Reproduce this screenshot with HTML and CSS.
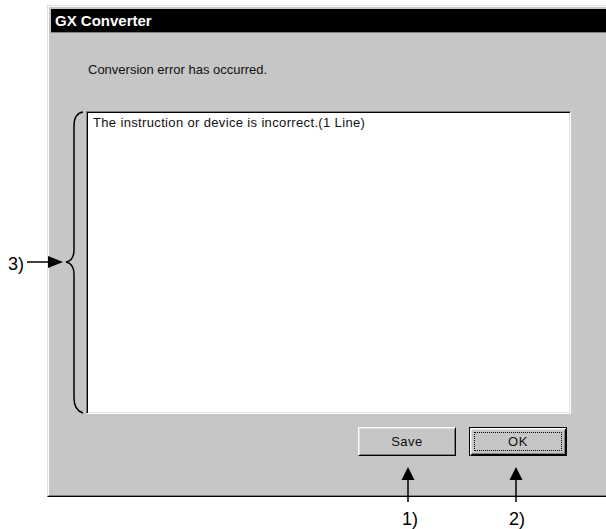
FILE: index.html
```html
<!DOCTYPE html>
<html lang="en">
<head>
    <meta charset="UTF-8">
    <title>GX Converter - Conversion error</title>
    <link rel="stylesheet" href="styles.css">
</head>
<body>
    <div class="page">
        <!-- Error dialog -->
        <div class="dialog">
            <div class="frame">
                <div class="title-bar">GX Converter</div>
                <div class="dialog-body">
                    <p class="message">Conversion error has occurred.</p>
                    <div class="list-box">
                        <div class="list-item">The instruction or device is incorrect.(1 Line)</div>
                    </div>
                    <div class="buttons">
                        <button class="btn">Save</button>
                        <button class="btn btn-default"><span class="focus">OK</span></button>
                    </div>
                </div>
            </div>
        </div>

        <!-- Callouts drawn over the screenshot -->
        <svg class="callouts" width="606" height="529" viewBox="0 0 606 529">
            <path d="M83,112 C76,113 74,118 74,126 L74,250 C74,257 71,261 66,262 C71,263 74,267 74,274 L74,398 C74,406 76,411 83,413" fill="none" stroke="#000" stroke-width="1.5"/>
            <line x1="27" y1="262" x2="50" y2="262" stroke="#000" stroke-width="1.5"/>
            <polygon points="48,256 63,262 48,268" fill="#000"/>
            <text x="8" y="270" class="label">3)</text>

            <polygon points="408,467 401.5,480 414.5,480" fill="#000"/>
            <line x1="408" y1="479" x2="408" y2="502" stroke="#000" stroke-width="1.5"/>
            <text x="402" y="525" class="label">1)</text>

            <polygon points="516,467 509.5,480 522.5,480" fill="#000"/>
            <line x1="516" y1="479" x2="516" y2="502" stroke="#000" stroke-width="1.5"/>
            <text x="509" y="525" class="label">2)</text>
        </svg>
    </div>
</body>
</html>
```

FILE: styles.css
```css
/* General Styles */
body {
    margin: 0;
    background-color: #fff;
    font-family: 'Liberation Sans', Arial, sans-serif;
    overflow: hidden;
}

.page {
    position: relative;
    width: 606px;
    height: 529px;
    overflow: hidden;
}

/* Dialog window (Win95 style) */
.dialog {
    margin: 5px 0 0 47px;
    width: 600px;
    border: 1px solid;
    border-color: #dfdfdf #000 #000 #dfdfdf;
}

.frame {
    border: 1px solid;
    border-color: #fff #808080 #808080 #fff;
    background-color: #c6c6c6;
    padding: 2px;
}

.title-bar {
    height: 23px;
    line-height: 23px;
    background-color: #000;
    color: #fff;
    font-weight: bold;
    font-size: 15px;
    padding-left: 4px;
    border-bottom: 1px solid #808080;
}

.dialog-body {
    padding: 29px 0 37px 35px;
}

.message {
    margin: 0;
    padding-left: 2px;
    font-size: 13px;
    line-height: 16px;
    color: #111;
}

/* List box */
.list-box {
    margin-top: 33px;
    width: 477px;
    height: 299px;
    background-color: #fff;
    border-top: 1px solid #808080;
    border-left: 1px solid #808080;
    border-right: 1px solid #fff;
    border-bottom: 1px solid #fff;
    box-shadow: inset 1px 1px 0 #000, inset -1px -1px 0 #dfdfdf;
    padding: 2px 0 0 6px;
    box-sizing: content-box;
}

.list-item {
    font-size: 13px;
    line-height: 16px;
    letter-spacing: 0.35px;
    color: #111;
    padding-top: 1px;
}

/* Buttons */
.buttons {
    display: flex;
    justify-content: flex-end;
    gap: 13px;
    width: 481px;
    margin-top: 13px;
}

.btn {
    width: 98px;
    height: 29px;
    padding: 0;
    background-color: #c6c6c6;
    font-family: 'Liberation Sans', Arial, sans-serif;
    font-size: 13px;
    letter-spacing: 0.5px;
    color: #111;
    border: 1px solid;
    border-color: #fff #000 #000 #fff;
    box-shadow: inset 1px 1px 0 #dfdfdf, inset -1px -1px 0 #808080;
}

.btn-default {
    border: 1px solid #000;
    box-shadow: inset 1px 1px 0 #fff, inset -1px -1px 0 #000, inset 2px 2px 0 #dfdfdf, inset -2px -2px 0 #808080;
    display: flex;
    padding: 4px;
}

.focus {
    flex: 1;
    display: flex;
    align-items: center;
    justify-content: center;
    border: 1px dotted #000;
}

/* Callouts */
.callouts {
    position: absolute;
    top: 0;
    left: 0;
    pointer-events: none;
}

.label {
    font-family: 'Liberation Sans', Arial, sans-serif;
    font-size: 18px;
    fill: #000;
}
```
